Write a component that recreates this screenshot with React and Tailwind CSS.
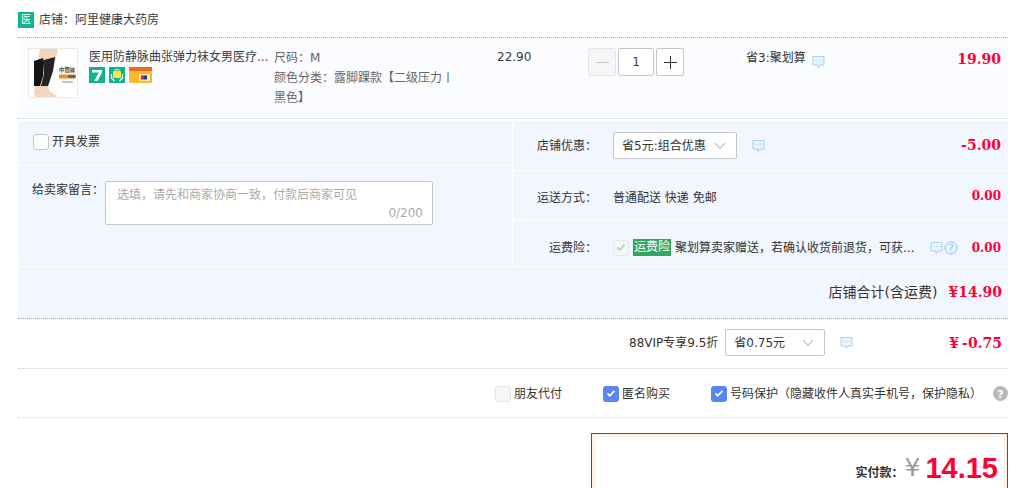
const font = { fontFamily: '"DejaVu Sans", "Noto Sans CJK SC", sans-serif' };

const Bubble = () => (
  <svg width="13" height="14" viewBox="0 0 13 14" className="shrink-0">
    <path d="M1 1.5h11v8.5H8l-2 2.5V10H1z" fill="#eaf4fd" stroke="#a5d3f3" strokeWidth="1" />
    <path d="M3.5 5.5h1M6 5.5h1M8.5 5.5h1" stroke="#a5d3f3" strokeWidth="1" />
  </svg>
);

const Chevron = () => (
  <svg width="12" height="8" viewBox="0 0 12 8" className="shrink-0">
    <path d="M1 1l5 5.5L11 1" fill="none" stroke="#9aa0aa" strokeWidth="1" />
  </svg>
);

const Check = ({ color = "#fff" }) => (
  <svg width="10" height="9" viewBox="0 0 10 9">
    <path d="M1.5 4.5l2.3 2.3L8.5 1.8" fill="none" stroke={color} strokeWidth="1.8" />
  </svg>
);

const Money = ({ children, className = "" }) => (
  <span className={`font-['DejaVu_Serif',serif] font-bold text-[#ff0036] ${className}`}>{children}</span>
);

const ProductImage = () => (
  <div className="w-[50px] h-[50px] border border-[#eee8e0] bg-white shrink-0 overflow-hidden">
    <svg width="48" height="48" viewBox="0 0 48 48">
      <path d="M11 0h18l-2 10-4 16-4 12 2 5 7 4-1 1H7l-2-4 1-8 1-12 2-14z" fill="#f2d6bf" />
      <path d="M5 12l9-3 1 4-1 14-3 10-6 0z" fill="#141414" />
      <path d="M15 11l11-3-2 14-5 15h-7l3-12z" fill="#232323" />
      <text x="30" y="23" fontSize="5.4" fontWeight="700" fill="#444">中筒袜</text>
      <rect x="30" y="25.5" width="17" height="4" fill="#ea8c2e" />
      <rect x="39" y="26" width="7" height="3" fill="#666" />
      <rect x="33" y="32" width="11" height="2" fill="#c4c4c4" />
    </svg>
  </div>
);

const SevenBadge = () => (
  <svg width="16" height="16" viewBox="0 0 16 16">
    <rect width="16" height="16" fill="#0fb38f" />
    <path d="M3 3h10v2.4L8.5 14H5.4l4.3-8.6H3z" fill="#fff" />
  </svg>
);

const BagBadge = () => (
  <svg width="16" height="16" viewBox="0 0 16 16">
    <rect width="16" height="16" fill="#0fb38f" />
    <rect x="4" y="4" width="8" height="7" rx="1" fill="#ffe23c" />
    <path d="M6 4V2.5h4V4" fill="none" stroke="#ffe23c" />
    <path d="M2.5 7v4l3 3M13.5 7v4l-3 3" fill="none" stroke="#fff" strokeWidth="1.2" />
  </svg>
);

const CardBadge = () => (
  <svg width="23" height="16" viewBox="0 0 23 16">
    <rect width="23" height="16" rx="1" fill="#ffb52e" />
    <rect width="23" height="4" fill="#ec6a22" />
    <rect x="10" y="7" width="11" height="7" fill="#ffe9a8" />
    <rect x="12" y="8.5" width="3" height="4" fill="#d2213a" />
    <rect x="15" y="8.5" width="3" height="4" fill="#123a8a" />
  </svg>
);

const Select = ({ width, children }) => (
  <div className={`${width} h-[27px] bg-white border border-[#c4c6cf] rounded-[2px] flex items-center justify-between pl-2 pr-[10px] text-[#333]`}>
    <span>{children}</span>
    <Chevron />
  </div>
);

const Box = ({ checked }) => {
  if (checked) {
    return (
      <span className="w-4 h-4 rounded-[3px] bg-[#5a85f5] flex items-center justify-center shrink-0">
        <Check />
      </span>
    );
  }
  return <span className="w-4 h-4 rounded-[3px] bg-[#f5f6f8] border border-[#e3e5ea] shrink-0" />;
};

const App = () => {
  return (
    <div style={font} className="w-[1020px] h-[488px] overflow-hidden bg-white text-[12px] text-[#3c3c3c] pl-[18px] pr-3">
      <div className="h-[38px] pt-[2px] flex items-center gap-[5px] border-b border-dotted border-[#8fa9d8]">
        <span className="w-4 h-4 bg-[#12b48f] text-white text-[10px] leading-4 text-center">医</span>
        <span>店铺：阿里健康大药房</span>
      </div>

      <div className="h-[81px] bg-[#fbfcff] border-b border-dotted border-[#cfcfcf] flex pl-[10px] pt-[10px]">
        <ProductImage />
        <div className="w-[185px] ml-[11px] shrink-0">
          <div className="whitespace-nowrap leading-[18px]">医用防静脉曲张弹力袜女男医疗...</div>
          <div className="flex gap-1 mt-[1px]">
            <SevenBadge />
            <BagBadge />
            <CardBadge />
          </div>
        </div>
        <div className="w-[223px] shrink-0 text-[#666] leading-5">
          <div>尺码：M</div>
          <div className="w-[180px]">颜色分类：露脚踝款【二级压力丨黑色】</div>
        </div>
        <div className="w-[91px] shrink-0 leading-[18px]">22.90</div>
        <div className="w-[158px] shrink-0 flex gap-[2px] h-7">
          <span className="w-7 h-7 border border-[#e3e5ea] rounded-[2px] bg-[#f5f6f8] flex items-center justify-center">
            <span className="w-[13px] h-px bg-[#c8c8c8]" />
          </span>
          <span className="w-9 h-7 border border-[#c4c6cf] rounded-[2px] bg-white text-center leading-[26px]">1</span>
          <span className="w-7 h-7 border border-[#c4c6cf] rounded-[2px] bg-white flex items-center justify-center">
            <svg width="13" height="13" viewBox="0 0 13 13"><path d="M0 6.5h13M6.5 0v13" stroke="#333" /></svg>
          </span>
        </div>
        <div className="flex gap-[6px] leading-[18px] text-[#333] h-[18px] mt-[1px]">
          <span>省3:聚划算</span>
          <span className="mt-[6px]"><Bubble /></span>
        </div>
        <div className="flex-1 text-right pr-[7px] mt-px">
          <Money className="text-[14px] leading-[20px]">19.90</Money>
        </div>
      </div>

      <div className="mt-[2px] grid grid-cols-[494px_1fr] gap-px h-[145px] bg-white">
        <div className="flex flex-col gap-px">
          <div className="h-[44px] pb-[2px] bg-[#f2f6ff] flex items-center gap-[3px] pl-[15px] text-[#333]">
            <span className="w-4 h-4 rounded-[3px] bg-white border border-[#c4c6cf]" />
            <span>开具发票</span>
          </div>
          <div className="flex-1 bg-[#f2f6ff] flex pl-[14px] pt-[15px]">
            <span className="w-[73px] text-[#333] leading-[18px]">给卖家留言：</span>
            <div className="w-[328px] h-[44px] bg-white border border-[#c4c6cf] rounded-[2px] px-[11px] pt-[4px] text-[#aaa] leading-[18px]">
              <div>选填，请先和商家协商一致，付款后商家可见</div>
              <div className="text-right -mr-[2px]">0/200</div>
            </div>
          </div>
        </div>
        <div className="flex flex-col gap-px">
          <div className="h-[49px] bg-[#f2f6ff] flex items-center pr-[7px]">
            <span className="w-[84px] text-right text-[#333]">店铺优惠：</span>
            <span className="ml-[16px]"><Select width="w-[124px]">省5元:组合优惠</Select></span>
            <span className="ml-[15px]"><Bubble /></span>
            <span className="flex-1 text-right"><Money className="text-[14px]">-5.00</Money></span>
          </div>
          <div className="h-[49px] bg-[#f2f6ff] flex items-center pr-[7px]">
            <span className="w-[84px] mt-1 text-right text-[#333]">运送方式：</span>
            <span className="ml-[16px] mt-1 text-[#333]">普通配送 快递 免邮</span>
            <span className="flex-1 text-right"><Money className="text-[12px]">0.00</Money></span>
          </div>
          <div className="flex-1 bg-[#f2f6ff] flex items-center pt-2 pr-[7px]">
            <span className="w-[84px] text-right text-[#333]">运费险：</span>
            <span className="ml-[16px] w-4 h-4 rounded-[3px] bg-[#f5f6f8] border border-[#e3e5ea] flex items-center justify-center">
              <Check color="#c8c8c8" />
            </span>
            <span className="ml-1 bg-[#30a661] text-white px-px leading-[17px]">运费险</span>
            <span className="ml-1 w-[242px] whitespace-nowrap text-[#333]">聚划算卖家赠送，若确认收货前退货，可获...</span>
            <span className="ml-[13px]"><Bubble /></span>
            <svg width="14" height="14" viewBox="0 0 14 14" className="ml-px">
              <circle cx="7" cy="7" r="6" fill="#eaf4fd" stroke="#8cc6ee" />
              <text x="7" y="10.5" fontSize="10" textAnchor="middle" fill="#8cc6ee">?</text>
            </svg>
            <span className="flex-1 text-right"><Money className="text-[12px]">0.00</Money></span>
          </div>
        </div>
      </div>

      <div className="mt-px h-[52px] bg-[#f2f6ff] border-b border-dotted border-[#7fa6e0] flex items-center justify-end gap-[11px] pr-[6px] text-[#333]">
        <span className="text-[14px]">店铺合计(含运费)</span>
        <Money className="text-[14px]">¥14.90</Money>
      </div>

      <div className="h-[50px] border-b border-dotted border-[#cfcfcf] flex items-center pb-[2px] pl-[611px] pr-[6px] text-[#333]">
        <span>88VIP专享9.5折</span>
        <span className="ml-[7px]"><Select width="w-[100px]">省0.75元</Select></span>
        <span className="ml-[15px]"><Bubble /></span>
        <span className="flex-1 text-right mt-[2px]"><Money className="text-[14px]">¥<span className="ml-[3px]">-0.75</span></Money></span>
      </div>

      <div className="h-[49px] pt-px border-b border-dotted border-[#d8d8d8] flex items-center pl-[477px] text-[#333]">
        <Box />
        <span className="ml-[3px] w-[89px]">朋友代付</span>
        <Box checked />
        <span className="ml-[3px] w-[89px]">匿名购买</span>
        <Box checked />
        <span className="ml-[3px]">号码保护（隐藏收件人真实手机号，保护隐私）</span>
        <svg width="15" height="15" viewBox="0 0 15 15" className="ml-auto">
          <circle cx="7.5" cy="7.5" r="7.5" fill="#b9b9b9" />
          <text x="7.5" y="11.5" fontSize="11" fontWeight="700" textAnchor="middle" fill="#fff">?</text>
        </svg>
      </div>

      <div className="mt-[15px] ml-[573px] h-[80px] border border-[#ff0036]">
        <div className="h-full border-[3px] border-[#fff0e8] flex items-start justify-end pr-[6px] pt-[17px]">
          <span className="font-bold text-[#333] mt-[10px]">实付款：</span>
          <span className="text-[#999] text-[25px] leading-[28px] ml-px">¥</span>
          <span className="ml-[5px] font-bold text-[#ff0036] text-[29px] leading-[28px] font-['Liberation_Sans',sans-serif]">14.15</span>
        </div>
      </div>
    </div>
  );
};

export default App;
